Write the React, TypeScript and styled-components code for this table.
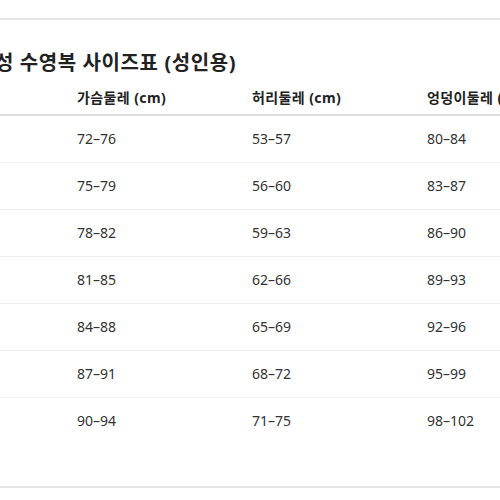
import React from 'react';
import styled, { createGlobalStyle } from 'styled-components';

const GlobalStyle = createGlobalStyle`
  body {
    margin: 0;
    background: #fff;
    overflow: hidden;
    font-family: "Noto Sans", "Noto Sans CJK KR", sans-serif;
    color: #333;
  }
`;

const Viewport = styled.div`
  width: 500px;
  height: 500px;
  overflow: hidden;
`;

const Page = styled.div`
  margin-left: -24px;
  width: 640px;
  padding-top: 18px;
`;

const Divider = styled.hr`
  margin: 0;
  border: 0;
  border-top: 2px solid #e6e6e6;
`;

const Section = styled.section`
  padding: 29px 0 42px 0;
`;

const Title = styled.h2`
  margin: 0 0 4px 0;
  font-size: 20px;
  line-height: 27px;
  font-weight: 700;
  letter-spacing: 0.6px;
  color: #222;
`;

const Table = styled.table`
  border-collapse: collapse;
  table-layout: fixed;
  width: 614px;
`;

const HeadCell = styled.th<{ width: number }>`
  box-sizing: border-box;
  width: ${({ width }) => width}px;
  padding: 8px 12px 6px 12px;
  line-height: 20px;
  font-size: 14px;
  font-weight: 700;
  letter-spacing: 0.4px;
  color: #222;
  text-align: left;
  white-space: nowrap;
  overflow: hidden;
  border-bottom: 2px solid #dedede;
`;

const Row = styled.tr<{ last: boolean }>`
  border-bottom: ${({ last }) => (last ? 'none' : '1px solid #efefef')};
`;

const Cell = styled.td`
  padding: 13px 12px;
  line-height: 20px;
  font-size: 14px;
  color: #333;
  white-space: nowrap;
`;

const columns = [
  { label: '', width: 89 },
  { label: '가슴둘레 (cm)', width: 175 },
  { label: '허리둘레 (cm)', width: 175 },
  { label: '엉덩이둘레 (cm)', width: 175 },
];

const rows = [
  ['72–76', '53–57', '80–84'],
  ['75–79', '56–60', '83–87'],
  ['78–82', '59–63', '86–90'],
  ['81–85', '62–66', '89–93'],
  ['84–88', '65–69', '92–96'],
  ['87–91', '68–72', '95–99'],
  ['90–94', '71–75', '98–102'],
];

function App() {
  return (
    <Viewport>
      <GlobalStyle />
      <Page>
        <Divider />
        <Section>
          <Title>여성 수영복 사이즈표 (성인용)</Title>
          <Table>
            <thead>
              <tr>
                {columns.map((col, i) => (
                  <HeadCell key={i} width={col.width}>
                    {col.label}
                  </HeadCell>
                ))}
              </tr>
            </thead>
            <tbody>
              {rows.map((row, index) => (
                <Row key={index} last={index === rows.length - 1}>
                  <Cell />
                  {row.map((value, i) => (
                    <Cell key={i}>{value}</Cell>
                  ))}
                </Row>
              ))}
            </tbody>
          </Table>
        </Section>
        <Divider />
      </Page>
    </Viewport>
  );
}

export default App;
